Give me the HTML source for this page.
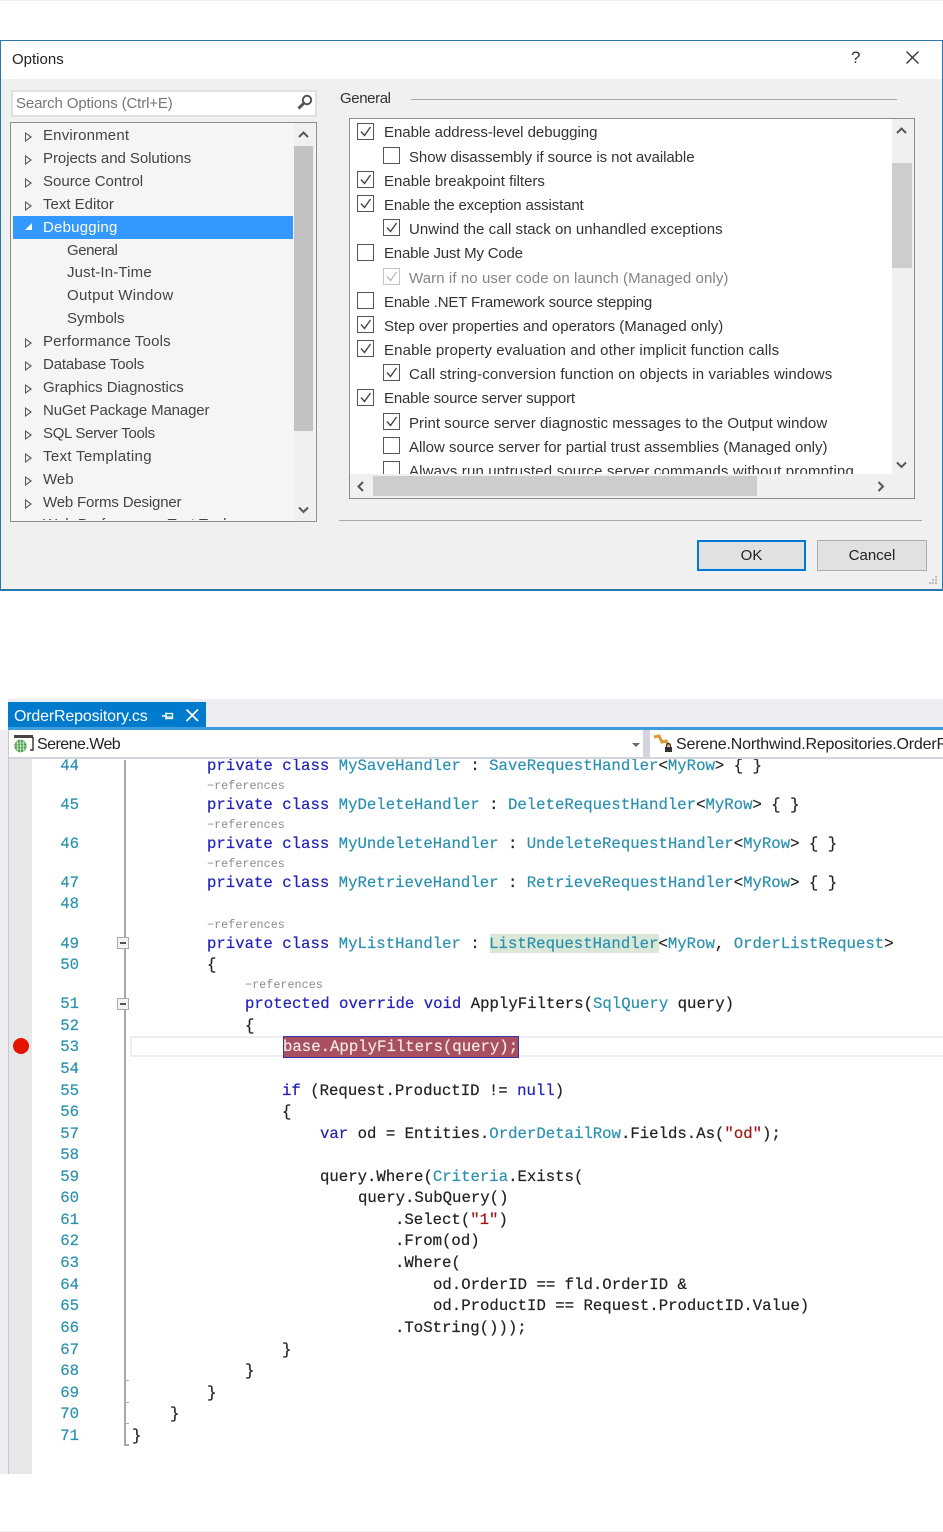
<!DOCTYPE html>
<html><head><meta charset="utf-8">
<style>
html,body{margin:0;padding:0;background:#fff}
#p{position:relative;width:943px;height:1532px;overflow:hidden;background:#fff;font-family:"Liberation Sans",sans-serif;filter:blur(.35px)}
#p div,#p span.a{position:absolute}
.t{white-space:nowrap;font-size:15px;line-height:20px;color:#333;margin-top:1px}
.tr{left:43px;font-size:15px;line-height:20px;color:#444;white-space:nowrap;margin-top:1px}
.tr2{left:67px}
.ar{left:25px;width:0;height:0;margin-top:1px;border-left:7px solid #555;border-top:5px solid transparent;border-bottom:5px solid transparent}
.ar:after{content:"";position:absolute;left:-6.2px;top:-3.2px;border-left:4.5px solid #f5f5f5;border-top:3.2px solid transparent;border-bottom:3.2px solid transparent}
.cb{width:15px;height:15px;border:1.5px solid #555;background:#fff;box-sizing:content-box}
.cb svg{position:absolute;left:1px;top:1px}
.l{white-space:nowrap;font-size:15px;line-height:20px;color:#333;margin-top:1px}
.c{left:0;font-family:"Liberation Mono",monospace;font-size:15.68px;line-height:20px;white-space:pre;color:#222;margin-top:1px;-webkit-text-stroke:.2px}
.k{color:#2222bb}.y{color:#2b91af}
.n{left:40px;width:39px;text-align:right;font-family:"Liberation Mono",monospace;font-size:15.68px;line-height:20px;color:#2b91af;margin-top:1px;-webkit-text-stroke:.2px}
.rf{font-family:"Liberation Mono",monospace;font-size:11.8px;line-height:16px;color:#8c8c8c;white-space:nowrap;margin-top:1px}
</style></head><body><div id="p">
<div style="left:0;top:0;width:943px;height:1px;background:#eee"></div>
<div style="left:0;top:1531px;width:943px;height:1px;background:#eee"></div>

<!-- dialog -->
<div style="left:0;top:40px;width:943px;height:551px;background:#f0f0f0;box-sizing:border-box;border:1px solid #2a78ab;border-bottom:2px solid #2a78ab"></div>
<div style="left:1px;top:41px;width:941px;height:38px;background:#fff"></div>
<div class="t" style="left:12px;top:49px;color:#222">Options</div>
<div class="t" style="left:851px;top:47px;color:#333;font-size:17px">?</div>
<svg style="position:absolute;left:905px;top:50px" width="15" height="15"><path d="M1.5 1.5L13.5 13.5M13.5 1.5L1.5 13.5" stroke="#333" stroke-width="1.3" fill="none"/></svg>

<div style="left:11px;top:90px;width:306px;height:27px;box-sizing:border-box;background:#fff;border:2px solid #e0e0e0"></div>
<div class="t" style="left:16px;top:93px;color:#777;letter-spacing:-.13px">Search Options (Ctrl+E)</div>
<svg style="position:absolute;left:296px;top:93px" width="18" height="18"><circle cx="11" cy="7" r="4.2" fill="none" stroke="#555" stroke-width="2"/><path d="M8 10L2.5 15.5" stroke="#555" stroke-width="3"/></svg>

<div style="left:10px;top:122px;width:307px;height:400px;box-sizing:border-box;background:#f5f5f5;border:1px solid #8e8e8e;overflow:hidden">
<div style="left:283px;top:0;width:21px;height:398px;background:#f0f0f0"></div>
<div style="left:283px;top:23px;width:19px;height:285px;background:#c2c2c2"></div>
<svg style="position:absolute;left:286px;top:7px" width="13" height="10"><path d="M2 7L6.5 2.5L11 7" stroke="#555" stroke-width="2" fill="none"/></svg>
<svg style="position:absolute;left:286px;top:382px" width="13" height="10"><path d="M2 2.5L6.5 7L11 2.5" stroke="#555" stroke-width="2" fill="none"/></svg>
<div style="left:2px;top:93px;width:280px;height:23px;background:#3399ff"></div>
</div>
<div class="tr" style="top:125px;letter-spacing:.18px">Environment</div><div class="ar" style="top:131px"></div>
<div class="tr" style="top:148px;letter-spacing:-.05px">Projects and Solutions</div><div class="ar" style="top:154px"></div>
<div class="tr" style="top:171px">Source Control</div><div class="ar" style="top:177px"></div>
<div class="tr" style="top:194px">Text Editor</div><div class="ar" style="top:200px"></div>
<svg style="position:absolute;left:24px;top:222px" width="9" height="9"><path d="M8 1V8H1Z" fill="#fff"/></svg>
<div class="tr" style="top:217px;color:#fff;letter-spacing:.22px">Debugging</div>
<div class="tr tr2" style="top:240px;letter-spacing:-.43px">General</div>
<div class="tr tr2" style="top:262px;letter-spacing:.17px">Just-In-Time</div>
<div class="tr tr2" style="top:285px;letter-spacing:.3px">Output Window</div>
<div class="tr tr2" style="top:308px">Symbols</div>
<div class="tr" style="top:331px;letter-spacing:.18px">Performance Tools</div><div class="ar" style="top:337px"></div>
<div class="tr" style="top:354px;letter-spacing:-.14px">Database Tools</div><div class="ar" style="top:360px"></div>
<div class="tr" style="top:377px;letter-spacing:-.05px">Graphics Diagnostics</div><div class="ar" style="top:383px"></div>
<div class="tr" style="top:400px;letter-spacing:-.14px">NuGet Package Manager</div><div class="ar" style="top:406px"></div>
<div class="tr" style="top:423px;letter-spacing:-.31px">SQL Server Tools</div><div class="ar" style="top:429px"></div>
<div class="tr" style="top:446px;letter-spacing:.33px">Text Templating</div><div class="ar" style="top:452px"></div>
<div class="tr" style="top:469px">Web</div><div class="ar" style="top:475px"></div>
<div class="tr" style="top:492px;letter-spacing:-.17px">Web Forms Designer</div><div class="ar" style="top:498px"></div>
<div style="left:11px;top:516px;width:283px;height:4px;overflow:hidden"><div class="tr" style="left:32px;top:-2px;color:#444">Web Performance Test Tools</div></div>

<div class="t" style="left:340px;top:88px;letter-spacing:-.4px">General</div>
<div style="left:411px;top:99px;width:486px;height:1px;background:#a8a8a8"></div>

<div style="left:349px;top:118px;width:566px;height:381px;box-sizing:border-box;background:#f0f0f0;border:1px solid #8e8e8e"></div>
<div style="left:350px;top:119px;width:542px;height:355px;background:#fff;overflow:hidden">
<div class="cb" style="left:7px;top:4px"><svg width="13" height="13"><path d="M2 6.5L5.5 10.5L11.5 2" stroke="#444" stroke-width="1.4" fill="none"/></svg></div><div class="l" style="left:34px;top:3px;letter-spacing:-.03px">Enable address-level debugging</div>
<div class="cb" style="left:33px;top:28px"></div><div class="l" style="left:59px;top:28px;letter-spacing:-.07px">Show disassembly if source is not available</div>
<div class="cb" style="left:7px;top:52px"><svg width="13" height="13"><path d="M2 6.5L5.5 10.5L11.5 2" stroke="#444" stroke-width="1.4" fill="none"/></svg></div><div class="l" style="left:34px;top:52px">Enable breakpoint filters</div>
<div class="cb" style="left:7px;top:76px"><svg width="13" height="13"><path d="M2 6.5L5.5 10.5L11.5 2" stroke="#444" stroke-width="1.4" fill="none"/></svg></div><div class="l" style="left:34px;top:76px;letter-spacing:-.13px">Enable the exception assistant</div>
<div class="cb" style="left:33px;top:100px"><svg width="13" height="13"><path d="M2 6.5L5.5 10.5L11.5 2" stroke="#444" stroke-width="1.4" fill="none"/></svg></div><div class="l" style="left:59px;top:100px;letter-spacing:.04px">Unwind the call stack on unhandled exceptions</div>
<div class="cb" style="left:7px;top:125px"></div><div class="l" style="left:34px;top:124px;letter-spacing:-.2px">Enable Just My Code</div>
<div class="cb" style="left:33px;top:149px;border-color:#c4c4c4"><svg width="13" height="13"><path d="M2 6.5L5.5 10.5L11.5 2" stroke="#bbb" stroke-width="1.4" fill="none"/></svg></div><div class="l" style="left:59px;top:149px;color:#858585;letter-spacing:.09px">Warn if no user code on launch (Managed only)</div>
<div class="cb" style="left:7px;top:173px"></div><div class="l" style="left:34px;top:173px;letter-spacing:-.16px">Enable .NET Framework source stepping</div>
<div class="cb" style="left:7px;top:197px"><svg width="13" height="13"><path d="M2 6.5L5.5 10.5L11.5 2" stroke="#444" stroke-width="1.4" fill="none"/></svg></div><div class="l" style="left:34px;top:197px;letter-spacing:-.02px">Step over properties and operators (Managed only)</div>
<div class="cb" style="left:7px;top:221px"><svg width="13" height="13"><path d="M2 6.5L5.5 10.5L11.5 2" stroke="#444" stroke-width="1.4" fill="none"/></svg></div><div class="l" style="left:34px;top:221px;letter-spacing:.14px">Enable property evaluation and other implicit function calls</div>
<div class="cb" style="left:33px;top:245px"><svg width="13" height="13"><path d="M2 6.5L5.5 10.5L11.5 2" stroke="#444" stroke-width="1.4" fill="none"/></svg></div><div class="l" style="left:59px;top:245px;letter-spacing:.13px">Call string-conversion function on objects in variables windows</div>
<div class="cb" style="left:7px;top:270px"><svg width="13" height="13"><path d="M2 6.5L5.5 10.5L11.5 2" stroke="#444" stroke-width="1.4" fill="none"/></svg></div><div class="l" style="left:34px;top:269px;letter-spacing:-.18px">Enable source server support</div>
<div class="cb" style="left:33px;top:294px"><svg width="13" height="13"><path d="M2 6.5L5.5 10.5L11.5 2" stroke="#444" stroke-width="1.4" fill="none"/></svg></div><div class="l" style="left:59px;top:294px;letter-spacing:.05px">Print source server diagnostic messages to the Output window</div>
<div class="cb" style="left:33px;top:318px"></div><div class="l" style="left:59px;top:318px">Allow source server for partial trust assemblies (Managed only)</div>
<div class="cb" style="left:33px;top:342px"></div><div class="l" style="left:59px;top:342px;letter-spacing:.16px">Always run untrusted source server commands without prompting</div>
</div>
<div style="left:892px;top:163px;width:20px;height:105px;background:#cdcdcd"></div>
<div style="left:373px;top:476px;width:384px;height:20px;background:#cdcdcd"></div>
<svg style="position:absolute;left:895px;top:126px" width="13" height="10"><path d="M2 7L6.5 2.5L11 7" stroke="#555" stroke-width="2" fill="none"/></svg>
<svg style="position:absolute;left:895px;top:460px" width="13" height="10"><path d="M2 2.5L6.5 7L11 2.5" stroke="#555" stroke-width="2" fill="none"/></svg>
<svg style="position:absolute;left:356px;top:480px" width="10" height="13"><path d="M7 2L2.5 6.5L7 11" stroke="#555" stroke-width="2" fill="none"/></svg>
<svg style="position:absolute;left:876px;top:480px" width="10" height="13"><path d="M2.5 2L7 6.5L2.5 11" stroke="#555" stroke-width="2" fill="none"/></svg>

<div style="left:339px;top:520px;width:583px;height:1px;background:#a8a8a8"></div>
<div style="left:697px;top:540px;width:109px;height:31px;box-sizing:border-box;background:#e1e1e1;border:2px solid #0078d7"></div>
<div class="t" style="left:697px;width:109px;top:545px;text-align:center;color:#222">OK</div>
<div style="left:817px;top:540px;width:110px;height:31px;box-sizing:border-box;background:#e1e1e1;border:1px solid #adadad"></div>
<div class="t" style="left:817px;width:110px;top:545px;text-align:center;color:#222">Cancel</div>
<svg style="position:absolute;left:926px;top:574px" width="14" height="14"><g fill="#bbb"><rect x="9" y="2" width="2" height="2"/><rect x="6" y="5" width="2" height="2"/><rect x="9" y="5" width="2" height="2"/><rect x="3" y="8" width="2" height="2"/><rect x="6" y="8" width="2" height="2"/><rect x="9" y="8" width="2" height="2"/></g></svg>

<!-- editor -->
<div style="left:0;top:699px;width:943px;height:28px;background:#eeeef2"></div>
<div style="left:0;top:699px;width:8px;height:28px;background:#fff"></div>
<div style="left:8px;top:702px;width:198px;height:25px;background:#007acc"></div>
<div style="left:8px;top:727px;width:935px;height:3px;background:#3d9ddb"></div>
<div class="t" style="left:14px;top:706px;color:#fff;font-size:16px;letter-spacing:-.17px">OrderRepository.cs</div>
<svg style="position:absolute;left:160px;top:709px" width="15" height="14"><path d="M2 7H6M6 3.5V10.5" stroke="#fff" stroke-width="1.4" fill="none"/><path d="M6 4.5H12.5V9.5H6" stroke="#fff" stroke-width="1.3" fill="none"/><path d="M6 8H12" stroke="#fff" stroke-width="1.2"/></svg>
<svg style="position:absolute;left:185px;top:708px" width="15" height="15"><path d="M1.5 1.5L13 13M13 1.5L1.5 13" stroke="#fff" stroke-width="1.7" fill="none"/></svg>

<div style="left:0;top:730px;width:9px;height:744px;background:#eeeef2"></div>
<div style="left:8px;top:730px;width:1px;height:744px;background:#c8c8c8"></div>
<div style="left:9px;top:758px;width:23px;height:716px;background:#e6e7e8"></div>
<div style="left:9px;top:730px;width:934px;height:27px;background:#fff"></div>
<div style="left:9px;top:757px;width:934px;height:2px;background:#d4d5dc"></div>
<div style="left:643px;top:730px;width:7px;height:27px;background:#d4d5dc"></div>
<svg style="position:absolute;left:13px;top:734px" width="22" height="20"><rect x="1" y="1" width="19" height="3" fill="#444"/><path d="M20 3V16H17" stroke="#333" stroke-width="1.4" fill="none"/><circle cx="7.5" cy="12" r="6.2" fill="#4fa04f"/><path d="M1.5 12H13.5M7.5 6V18M2.5 9H12.5M2.5 15H12.5M4.5 7V17M10.5 7V17" stroke="#cfe8cf" stroke-width=".8" fill="none"/></svg>
<div class="t" style="left:37px;top:734px;font-size:16px;color:#222;letter-spacing:-.55px">Serene.Web</div>
<div style="left:632px;top:743px;border-top:4px solid #666;border-left:4px solid transparent;border-right:4px solid transparent"></div>
<svg style="position:absolute;left:652px;top:733px" width="22" height="21"><path d="M2 4L7 3L10 9L14 8L17 13" stroke="#d99a3a" stroke-width="3" fill="none"/><rect x="13" y="14" width="7" height="5" fill="#333"/><path d="M14.5 14V12.5A2 2 0 0 1 18.5 12.5V14" stroke="#333" stroke-width="1.2" fill="none"/></svg>
<div class="t" style="left:676px;top:734px;font-size:16px;color:#222;letter-spacing:-.18px">Serene.Northwind.Repositories.OrderRepository</div>

<div style="left:0;top:759px;width:943px;height:715px;overflow:hidden">
<div style="left:0;top:1px;width:943px;height:714px">
<div style="left:124px;top:0;width:1.5px;height:685px;background:#a8a8a8"></div>
<div style="left:117px;top:177px;width:12px;height:12px;box-sizing:border-box;border:1px solid #aaa;background:#f3f3f3"><div style="left:2px;top:4px;width:6px;height:1.5px;background:#555"></div></div>
<div style="left:117px;top:238px;width:12px;height:12px;box-sizing:border-box;border:1px solid #aaa;background:#f3f3f3"><div style="left:2px;top:4px;width:6px;height:1.5px;background:#555"></div></div>
<div style="left:124px;top:620px;width:5px;height:1px;background:#a8a8a8"></div>
<div style="left:124px;top:642px;width:5px;height:1px;background:#a8a8a8"></div>
<div style="left:124px;top:663px;width:5px;height:1px;background:#a8a8a8"></div>
<div style="left:124px;top:684px;width:5px;height:1.5px;background:#a8a8a8"></div>
<div style="left:130px;top:276px;width:813px;height:21px;box-sizing:border-box;border:2px solid #eeeef2;border-right:0"></div>
<div style="left:490px;top:174px;width:169px;height:19px;background:#dbe8d8"></div>
<div style="left:283px;top:276px;width:236px;height:22px;box-sizing:border-box;background:#a8505f;border:1px solid #3535a8"></div>
<div style="left:13px;top:278px;width:16px;height:16px;border-radius:50%;background:#e51400"></div>

<div class="n" style="top:-5px">44</div><div class="n" style="top:34px">45</div><div class="n" style="top:73px">46</div><div class="n" style="top:112px">47</div><div class="n" style="top:133px">48</div><div class="n" style="top:173px">49</div><div class="n" style="top:194px">50</div><div class="n" style="top:233px">51</div><div class="n" style="top:255px">52</div><div class="n" style="top:276px">53</div><div class="n" style="top:298px">54</div><div class="n" style="top:320px">55</div><div class="n" style="top:341px">56</div><div class="n" style="top:363px">57</div><div class="n" style="top:384px">58</div><div class="n" style="top:406px">59</div><div class="n" style="top:427px">60</div><div class="n" style="top:449px">61</div><div class="n" style="top:470px">62</div><div class="n" style="top:492px">63</div><div class="n" style="top:514px">64</div><div class="n" style="top:535px">65</div><div class="n" style="top:557px">66</div><div class="n" style="top:579px">67</div><div class="n" style="top:600px">68</div><div class="n" style="top:622px">69</div><div class="n" style="top:643px">70</div><div class="n" style="top:665px">71</div>

<div class="c" style="left:207px;top:-5px"><span class="k">private class</span> <span class="y">MySaveHandler</span> : <span class="y">SaveRequestHandler</span>&lt;<span class="y">MyRow</span>&gt; { }</div>
<div class="rf" style="left:207px;top:17px">−references</div>
<div class="c" style="left:207px;top:34px"><span class="k">private class</span> <span class="y">MyDeleteHandler</span> : <span class="y">DeleteRequestHandler</span>&lt;<span class="y">MyRow</span>&gt; { }</div>
<div class="rf" style="left:207px;top:56px">−references</div>
<div class="c" style="left:207px;top:73px"><span class="k">private class</span> <span class="y">MyUndeleteHandler</span> : <span class="y">UndeleteRequestHandler</span>&lt;<span class="y">MyRow</span>&gt; { }</div>
<div class="rf" style="left:207px;top:95px">−references</div>
<div class="c" style="left:207px;top:112px"><span class="k">private class</span> <span class="y">MyRetrieveHandler</span> : <span class="y">RetrieveRequestHandler</span>&lt;<span class="y">MyRow</span>&gt; { }</div>
<div class="rf" style="left:207px;top:156px">−references</div>
<div class="c" style="left:207px;top:173px"><span class="k">private class</span> <span class="y">MyListHandler</span> : <span class="y">ListRequestHandler</span>&lt;<span class="y">MyRow</span>, <span class="y">OrderListRequest</span>&gt;</div>
<div class="c" style="left:207px;top:194px">{</div>
<div class="rf" style="left:245px;top:216px">−references</div>
<div class="c" style="left:245px;top:233px"><span class="k">protected override void</span> ApplyFilters(<span class="y">SqlQuery</span> query)</div>
<div class="c" style="left:245px;top:255px">{</div>
<div class="c" style="left:283px;top:276px;color:#f3e6e6">base.ApplyFilters(query);</div>
<div class="c" style="left:282px;top:320px"><span class="k">if</span> (Request.ProductID != <span class="k">null</span>)</div>
<div class="c" style="left:282px;top:341px">{</div>
<div class="c" style="left:320px;top:363px"><span class="k">var</span> od = Entities.<span class="y">OrderDetailRow</span>.Fields.As(<span style="color:#a31515">"od"</span>);</div>
<div class="c" style="left:320px;top:406px">query.Where(<span class="y">Criteria</span>.Exists(</div>
<div class="c" style="left:358px;top:427px">query.SubQuery()</div>
<div class="c" style="left:395px;top:449px">.Select(<span style="color:#a31515">"1"</span>)</div>
<div class="c" style="left:395px;top:470px">.From(od)</div>
<div class="c" style="left:395px;top:492px">.Where(</div>
<div class="c" style="left:433px;top:514px">od.OrderID == fld.OrderID &amp;</div>
<div class="c" style="left:433px;top:535px">od.ProductID == Request.ProductID.Value)</div>
<div class="c" style="left:395px;top:557px">.ToString()));</div>
<div class="c" style="left:282px;top:579px">}</div>
<div class="c" style="left:245px;top:600px">}</div>
<div class="c" style="left:207px;top:622px">}</div>
<div class="c" style="left:170px;top:643px">}</div>
<div class="c" style="left:132px;top:665px">}</div>
</div>
</div>
</div></body></html>
